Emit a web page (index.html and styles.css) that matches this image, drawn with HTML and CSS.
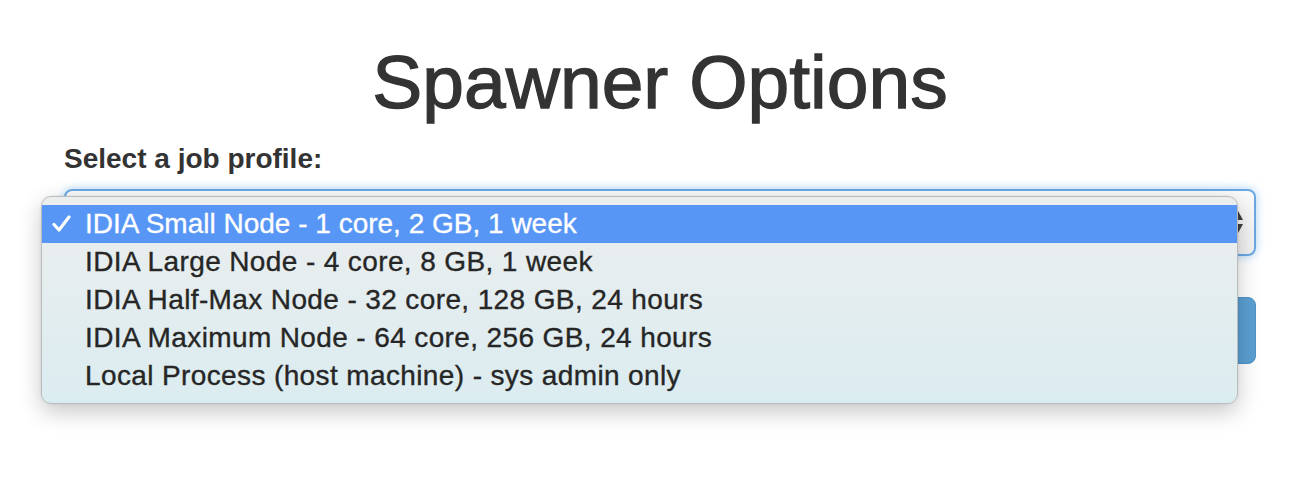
FILE: index.html
```html
<!DOCTYPE html>
<html lang="en">
<head>
<meta charset="utf-8">
<title>Spawner Options</title>
<link rel="stylesheet" href="styles.css">
</head>
<body>
<div class="page">
  <h1 class="title">Spawner Options</h1>
  <form class="form">
    <label class="label">Select a job profile:</label>
    <div class="select-wrap">
      <div class="select">
        <svg class="arrows" width="14" height="26" viewBox="0 0 14 26">
          <path d="M7 0 L13 11 L1 11 Z" fill="#404040"/>
          <path d="M1 15 L13 15 L7 26 Z" fill="#404040"/>
        </svg>
      </div>
      <ul class="menu">
        <li class="option selected"><span class="check"><svg width="19" height="17" viewBox="0 0 19 17"><path d="M2 9.5 L7 15 L17 2" fill="none" stroke="#ffffff" stroke-width="3.2" stroke-linecap="round" stroke-linejoin="round"/></svg></span>IDIA Small Node - 1 core, 2 GB, 1 week</li>
        <li class="option"><span class="check"></span>IDIA Large Node - 4 core, 8 GB, 1 week</li>
        <li class="option"><span class="check"></span>IDIA Half-Max Node - 32 core, 128 GB, 24 hours</li>
        <li class="option"><span class="check"></span>IDIA Maximum Node - 64 core, 256 GB, 24 hours</li>
        <li class="option"><span class="check"></span>Local Process (host machine) - sys admin only</li>
      </ul>
    </div>
    <div class="actions">
      <button type="button" class="btn">Spawn</button>
    </div>
  </form>
</div>
</body>
</html>
```

FILE: styles.css
```css
html, body {
  margin: 0;
  padding: 0;
  background: #ffffff;
}

body {
  font-family: "Liberation Sans", Arial, Helvetica, sans-serif;
  color: #333333;
  min-height: 482px;
}

.page {
  padding: 41px 46px 120px 64px;
}

.title {
  margin: 0;
  font-size: 75px;
  line-height: 1.1;
  font-weight: 500;
  text-align: center;
  color: #333333;
  -webkit-text-stroke: 1.3px #333333;
}

.form {
  margin-top: 15px;
  display: flex;
  flex-direction: column;
}

.label {
  display: block;
  font-size: 28px;
  line-height: 40px;
  font-weight: bold;
  color: #333333;
  margin-bottom: 10px;
}

.select-wrap {
  position: relative;
}

.select {
  box-sizing: border-box;
  height: 67px;
  border: 2px solid #6aa8e4;
  border-radius: 8px;
  background: linear-gradient(#fafafa, #f0f0f0);
  box-shadow: 0 0 10px rgba(102, 175, 233, 0.55);
  display: flex;
  align-items: center;
  justify-content: flex-end;
  padding: 0 8px 0 20px;
}

.arrows {
  display: block;
  margin-right: 2px;
}

.menu {
  position: absolute;
  top: 7px;
  left: -23px;
  right: 18px;
  margin: 0;
  padding: 8px 0 8px 0;
  list-style: none;
  box-sizing: border-box;
  border: 1px solid #b9bcbd;
  border-radius: 10px;
  background: linear-gradient(#eceeee, #dbecf0);
  box-shadow: 0 8px 22px rgba(0, 0, 0, 0.22), 0 0 3px rgba(0, 0, 0, 0.08);
  overflow: hidden;
}

.option {
  display: flex;
  align-items: center;
  height: 38px;
  font-size: 28px;
  line-height: 38px;
  color: #262626;
  white-space: nowrap;
  letter-spacing: 0.38px;
  -webkit-text-stroke: 0.35px #262626;
}

.option .check {
  width: 43px;
  box-sizing: border-box;
  padding-left: 10px;
  display: flex;
  align-items: center;
}

.option .check svg {
  display: block;
}

.option.selected {
  background: #5896f6;
  color: #ffffff;
  letter-spacing: 0;
  -webkit-text-stroke: 0.3px #ffffff;
}

.actions {
  display: flex;
  justify-content: flex-end;
  margin-top: 41px;
}

.btn {
  height: 67px;
  width: 180px;
  border: 1px solid #4f92c7;
  border-radius: 8px;
  background: #5b9fd2;
  color: #ffffff;
  font-family: "Liberation Sans", Arial, sans-serif;
  font-size: 28px;
}
```
